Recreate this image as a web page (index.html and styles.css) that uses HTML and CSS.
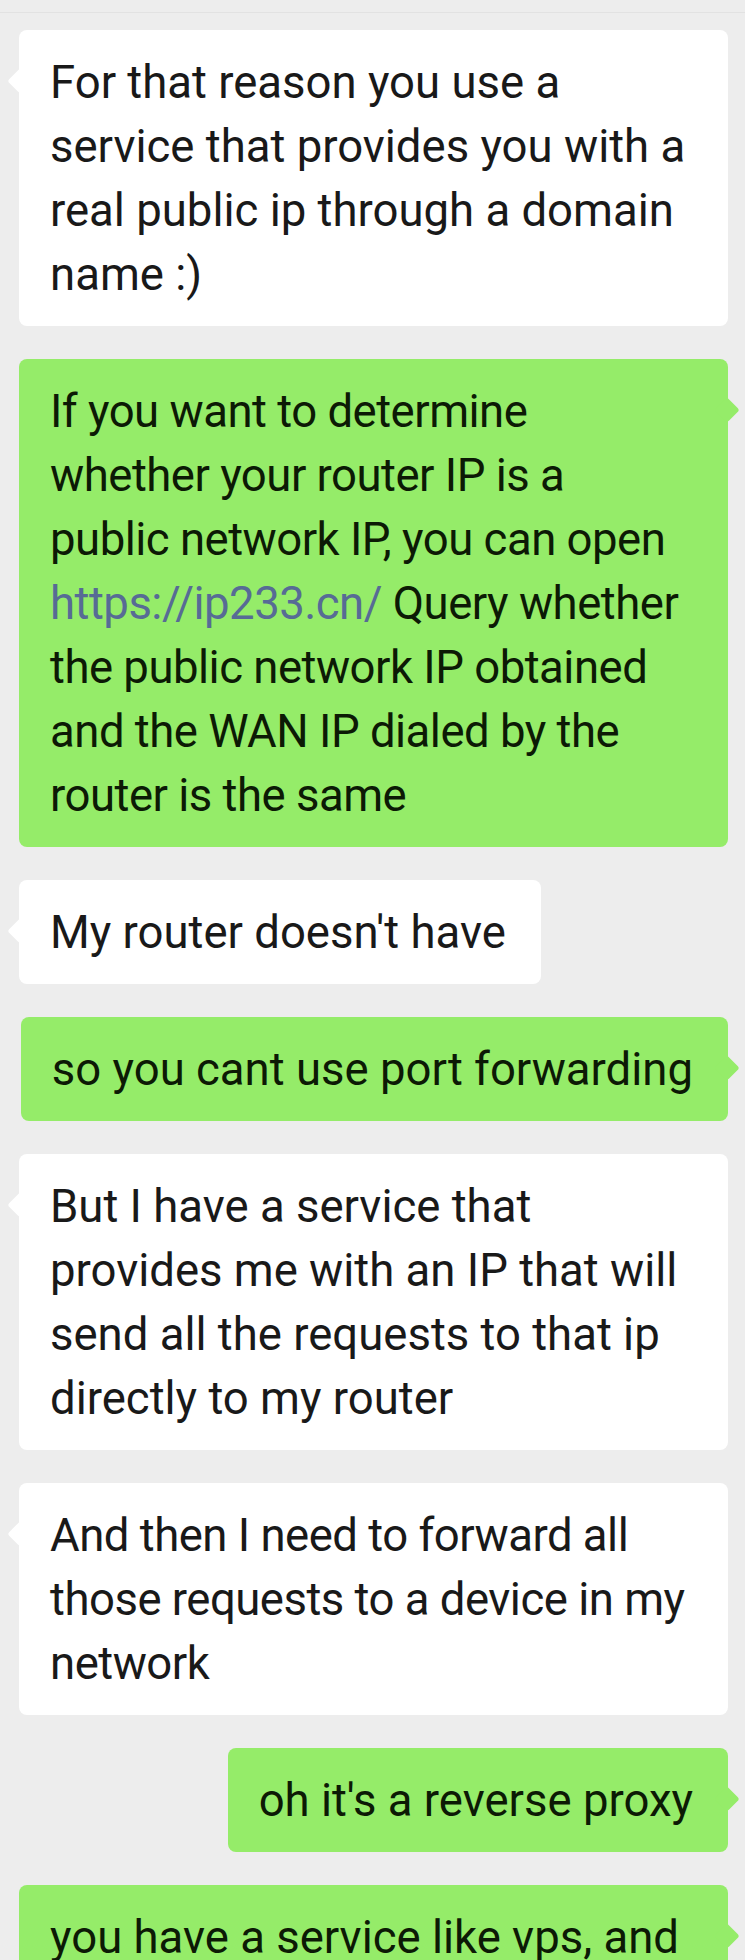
FILE: index.html
```html
<!DOCTYPE html>
<html lang="en">
<head>
    <meta charset="UTF-8">
    <meta name="viewport" content="width=device-width, initial-scale=1.0">
    <title>Chat</title>
    <link rel="stylesheet" href="styles.css">
</head>
<body>
    <div class="top-bar"></div>
    <div class="chat">
        <div class="msg in">For that reason you use a service that provides you with a real public ip through a domain name :)</div>
        <div class="msg out tight">If you want to determine whether your router IP is a public network IP, you can open <a class="link" href="#">https://ip233.cn/</a> Query whether the public network IP obtained and the WAN IP dialed by the router is the same</div>
        <div class="msg in">My router doesn't have</div>
        <div class="msg out">so you cant use port forwarding</div>
        <div class="msg in">But I have a service that provides me with an IP that will send all the requests to that ip directly to my router</div>
        <div class="msg in tight">And then I need to forward all those requests to a device in my network</div>
        <div class="msg out">oh it's a reverse proxy</div>
        <div class="msg out">you have a service like vps, and you can bind a domain name to it</div>
    </div>
</body>
</html>
```
FILE: styles.css
```css
body {
    margin: 0;
    background-color: #ededed;
    font-family: Roboto, 'Noto Sans', sans-serif;
    color: #191919;
    height: 1960px;
    overflow: hidden;
}
.top-bar {
    height: 12px;
    border-bottom: 1px solid #e2e2e2;
}
.chat {
    display: flex;
    flex-direction: column;
    align-items: flex-start;
    gap: 33px;
    padding: 17px 17px 0 19px;
}
.msg {
    position: relative;
    max-width: 710px;
    box-sizing: border-box;
    padding: 21px 35px 19px 31px;
    border-radius: 8px;
    font-size: 45.5px;
    line-height: 64px;
    background-color: #fff;
}
/* a few bubbles need slightly tighter text to wrap like the app does */
.msg.tight {
    letter-spacing: -0.5px;
}
.msg::before {
    content: '';
    position: absolute;
    top: 42px;
    width: 18px;
    height: 18px;
    border-radius: 3px;
    background-color: inherit;
    transform: rotate(45deg);
}
.msg.in::before {
    left: -8px;
}
.msg.out {
    align-self: flex-end;
    background-color: #95ec69;
    color: #0c1a05;
}
.msg.out::before {
    right: -8px;
}
.link {
    color: #576b95;
    text-decoration: none;
}
```
